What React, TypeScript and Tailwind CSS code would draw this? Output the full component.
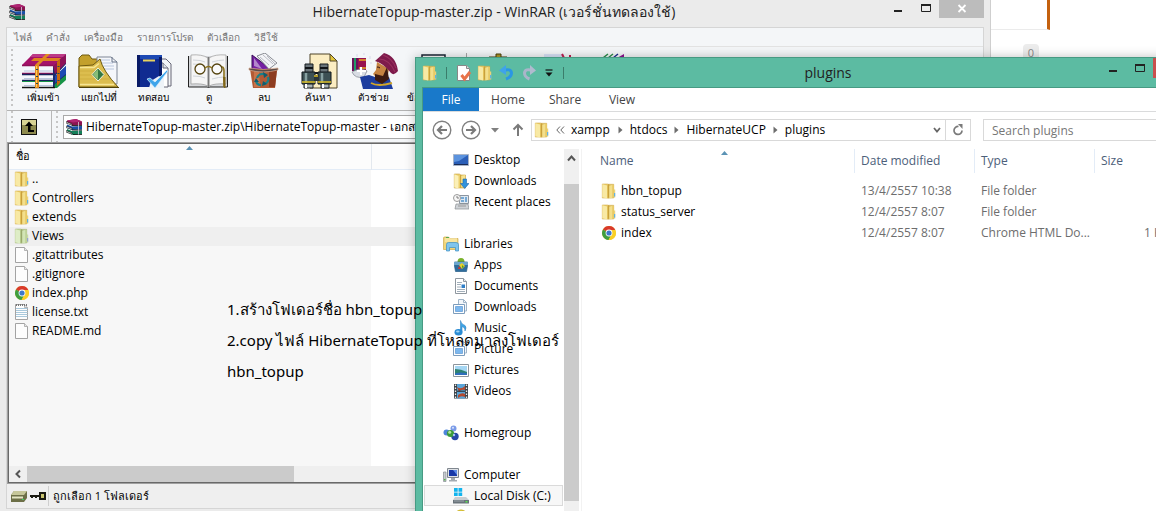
import React from "react";

type IconProps = { className?: string };

function Folder({ className = "" }: IconProps) {
  return (
    <svg viewBox="0 0 16 16" className={`h-4 w-4 shrink-0 ${className}`} aria-hidden="true">
      <path d="M1.300 1h5.200L8 2v13H1.300z" fill="#eacb69" stroke="#d6b152" strokeWidth=".6" />
      <path d="M7 1.300h5.700V15H7z" fill="#e6c762" stroke="#cfa94a" strokeWidth=".6" />
      <path d="M1.300 1.300 6 2.500v13L1.300 14.300z" fill="#f8e9a4" />
      <path d="M6 2.500 7 2v13l-1 .5z" fill="#e3c25a" />
      <path d="M7 1.500h1.300v13.300H7z" fill="#c9a03c" />
      <path d="M8.300 3 11.500 1.800v13l-3.200.7z" fill="#f3df8c" />
      <path d="M11.500 2h1.500v12.500h-1.500z" fill="#e8ca66" />
      <path d="M13 6.500h1.200v8H13z" fill="#ecd27a" />
      <path d="M13 10h1.200v3.500H13z" fill="#5fb2e4" />
    </svg>
  );
}

function Page({ lines = false }: { lines?: boolean }) {
  return (
    <svg viewBox="0 0 16 16" className="h-4 w-4 shrink-0" aria-hidden="true">
      <path d="M1.500.5h9l3 3v12h-12z" fill="#fdfdfd" stroke="#a3a3a3" />
      <path d="M10.500.5v3h3" fill="#e8e8e8" stroke="#a3a3a3" strokeWidth=".8" />
      {lines && (
        <>
          <path d="M2 4.500h11.500M2 6.500h11.500M2 8.500h11.500M2 10.500h11.500M2 12.500h11.500" stroke="#a9c9dc" />
          <path d="M2 1h11" stroke="#777" strokeDasharray="1 1" strokeWidth="2" />
        </>
      )}
    </svg>
  );
}

function Chrome() {
  return (
    <svg viewBox="0 0 16 16" className="h-4 w-4 shrink-0" aria-hidden="true">
      <circle cx="8" cy="8" r="7" fill="#f9cf26" />
      <path d="M8 8 1.940 4.500A7 7 0 0 1 14.300 5H8z" fill="#d93a2b" />
      <path d="M8 8 1.940 4.500A7 7 0 0 0 7.600 15l3.200-5.500z" fill="#3f9e3f" />
      <path d="M8 8h3L7.600 15A7 7 0 0 0 14.300 5H8z" fill="#f9cf26" />
      <circle cx="8" cy="8" r="3.400" fill="#fff" />
      <circle cx="8" cy="8" r="2.600" fill="#3c78c8" />
    </svg>
  );
}

function MiniBooks() {
  return (
    <svg viewBox="0 0 16 16" className="h-4 w-4 shrink-0" aria-hidden="true">
      <path d="M1 1.500 10 0l6 2.500V6L6 6.500 1 4z" fill="#8a1452" />
      <path d="M1 1.500 10 0l6 2.500-9 1z" fill="#b02573" />
      <path d="M1 5.500 6 7.500 16 7v3.500L6 11 1 9z" fill="#1950a8" />
      <path d="M1 10l5 2 10-.5V15l-9 1-6-2.500z" fill="#15805a" />
      <path d="M0 2.500 6 5v1.200L0 4zM0 7l6 2.300v1.200L0 8.500zM0 11.500 6 14v1.200L0 13z" fill="#fff" stroke="#111" strokeWidth=".6" />
      <path d="M6 6.600h10M6 11h10M7 15.600h9" stroke="#111" strokeWidth=".9" />
      <path d="M12.500 3v12.500" stroke="#d6cde0" strokeWidth=".8" />
    </svg>
  );
}

function BooksBig() {
  return (
    <svg viewBox="0 0 44 36" className="h-9 w-11" aria-hidden="true">
      <path d="M31 12.500 44 1v10L34 22v1l10-10v10L34 34l-3 1z" fill="#1b2a6b" />
      <path d="M31 12.500 44 1v9L33 21z" fill="#8d1258" />
      <path d="M33 23l11-10v8L33 30z" fill="#1c49b4" />
      <path d="M33 31l11-9v5l-9 8h-3z" fill="#179447" />
      <path d="M0 12 11 1h33L31 13z" fill="#a5126a" />
      <path d="M11 1h33l-3 3H8z" fill="#bd3a86" />
      <path d="M2 13h29v7H2zM2 22h29v5H2zM2 29h29v5H2z" fill="#f4f7fc" />
      <path d="M2 18h29M2 25.500h29M2 32.500h29" stroke="#b9c6dd" />
      <path d="M0 12.500h31M0 20.500h31" stroke="#8d1258" strokeWidth="1.500" />
      <path d="M0 21.500h31M0 27.500h31" stroke="#14235a" strokeWidth="1.300" />
      <path d="M0 28.500h31" stroke="#179447" />
      <path d="M0 34.500h33" stroke="#111" strokeWidth="1.400" />
      <path d="M12 5h27l-3 3H9z" fill="#dd8220" />
      <path d="M13 12 24 1h4L17 12v23h-4z" fill="#e08a1e" />
      <path d="M14.500 13v21" stroke="#ffcb5c" strokeWidth="1" />
      <path d="M35 9l3-3v24l-3 3z" fill="#c8680f" />
      <path d="M15 16v1M15 23v1M15 30v1M36.500 13v1M36.500 20v1M36.500 27v1" stroke="#234a5c" strokeWidth="2" />
    </svg>
  );
}

function ExtractBig() {
  return (
    <svg viewBox="0 0 44 36" className="h-9 w-11" aria-hidden="true">
      <path d="M2 5 5 2h7l3 4h8v28H2z" fill="#c3a02c" stroke="#6f5a10" />
      <path d="M20 4h14l6 5v22H20z" fill="#f5f7fb" stroke="#7e8796" />
      <path d="M23 7h10M23 10h13M23 13h14M23 16h14" stroke="#b9c6dd" />
      <path d="M35 4v5h5" fill="none" stroke="#68748a" />
      <path d="M2 13 16 12l7-6q3 12 18 28H2z" fill="#dcbd4e" stroke="#6f5a10" />
      <path d="M3 14.500h14l5-4M3 31.500h34" stroke="#f6e594" strokeWidth="1.500" fill="none" />
      <path d="M3 18h20M3 22h26M3 26h30" stroke="#cfae3f" />
      <path d="m21 15 6 6.500-6 6.500-6-6.500z" fill="#347842" stroke="#f3f3e0" />
      <path d="M21 16v11l-5-5.500z" fill="#86bd78" />
      <path d="M2 34.500h40" stroke="#514209" />
    </svg>
  );
}

function TestBig() {
  return (
    <svg viewBox="0 0 44 36" className="h-9 w-11" aria-hidden="true">
      <path d="M22 6h12l5 5v22H22z" fill="#f1f3f6" stroke="#667" />
      <path d="M20 10h11l5 5v19H20z" fill="#fff" stroke="#667" />
      <path d="M31 10v5h5" fill="#dde2e9" stroke="#667" />
      <path d="M5 2h25v32H5z" fill="#102b91" />
      <path d="M5 2h25v4H5z" fill="#1c49b4" />
      <path d="M5 2h3v32H5zM27 4h3v30h-3z" fill="#081a66" />
      <path d="M11 7.500h12" stroke="#e7d35f" strokeWidth="2" />
      <path d="m19 28 8-5 5 2v10H17z" fill="#eef3f8" />
      <path d="m15 26 3-1 5 4L35 17l1 1-13 17z" fill="#3fa4ea" stroke="#d5eeff" strokeWidth=".7" />
    </svg>
  );
}

function ViewBig() {
  return (
    <svg viewBox="0 0 44 36" className="h-9 w-11" aria-hidden="true">
      <path d="M1.500 3v31h19l1 1 1-1h18V3" fill="#d5d7da" stroke="#222" />
      <path d="M4 2q11-1 17 3v28q-6-3-17-2zM39 2Q28 1 22 5v28q6-3 17-2z" fill="#f5f5f5" stroke="#999" strokeWidth=".7" />
      <path d="M6 7q8 0 12 2M6 11q8 0 12 2M6 23q8 0 12 2M25 9q7-2 12-2M25 26q7-2 12-2" stroke="#d0d4d9" fill="none" />
      <path d="M21.500 4v30" stroke="#777" strokeWidth="1.500" />
      <circle cx="13" cy="16" r="5" fill="#fafafa" stroke="#54430e" strokeWidth="1.300" />
      <circle cx="30" cy="16" r="5" fill="#fafafa" stroke="#54430e" strokeWidth="1.300" />
      <path d="M18 15q3.500-3 7 0M35 14q2 0 2 4v16" stroke="#8b721c" strokeWidth="1.600" fill="none" />
      <path d="M36 24h2.500v11H37z" fill="#80661a" />
    </svg>
  );
}

function DeleteBig() {
  return (
    <svg viewBox="0 0 44 36" className="h-9 w-11" aria-hidden="true">
      <path d="M10 2 30 17H10z" fill="#7520a2" stroke="#3a0e58" />
      <path d="M12 5v8l8 3z" fill="#dccde6" opacity=".6" />
      <path d="m15 3 8-3 12 10-8 6z" fill="#f3f4f7" stroke="#8a8d94" />
      <path d="m18 4 9 8M21 2l10 9M25 3l8 8" stroke="#b8bbc3" />
      <path d="M8 16h27l-2 19H11z" fill="#b25a35" />
      <path d="M27 17h8l-2 17h-6z" fill="#8d3c20" />
      <path d="M12 18h5l1 16h-6z" fill="#c9744a" />
      <path d="M7 15q14 3 29 0v2q-15 4-29 0z" fill="#5c4b48" stroke="#d9a98c" strokeWidth=".7" />
      <path d="M15 25a6 6 0 0 1 7-4M26 24a5 5 0 0 1-4 7M19 32a5 5 0 0 1-5-4" stroke="#1a7f88" strokeWidth="2.300" fill="none" />
      <path d="m21 19 5 3-4 3zM25 31l-5 2 1-5zM12 29l2-4 3 4z" fill="#0e5e70" />
    </svg>
  );
}

function FindBig() {
  return (
    <svg viewBox="0 0 44 36" className="h-9 w-11" aria-hidden="true">
      <path d="M13 1h20l7 7v27H13z" fill="#fbedc2" stroke="#4f4428" />
      <path d="M33 1v7h7z" fill="#e2c53b" stroke="#4f4428" />
      <path d="M8 11h8v9H8zM23 11h8v9h-8z" fill="#69747a" stroke="#171c20" />
      <path d="M8 15h8M23 15h8M17 20h6" stroke="#101418" strokeWidth="2" />
      <path d="M5 19h13v12H5zM21 19h13v12H21z" fill="#3c5054" stroke="#13191c" />
      <path d="M9 20v10M25 20v10" stroke="#86a0a1" strokeWidth="2.500" />
      <path d="M18 22h4v6h-4z" fill="#2b3437" />
      <path d="M5 29h13M21 29h13M17 23h4" stroke="#d9bc22" strokeWidth="1.500" />
      <path d="M7 31h9v4H7zM24 31h8v4h-8z" fill="#aab3b5" stroke="#181c1e" />
      <path d="M9 31v4M26 31v4" stroke="#fff" strokeWidth="2" />
    </svg>
  );
}

function WizardBig() {
  return (
    <svg viewBox="0 0 50 36" className="h-9 w-[50px]" aria-hidden="true">
      <path d="M3 5h7v13H3z" fill="#6c1258" />
      <path d="M5 5h2v13H5z" fill="#1f9a66" />
      <path d="M9 5h8v14H9z" fill="#981150" />
      <path d="M10 7h7M10 15h7" stroke="#e5aa23" strokeWidth="1.500" />
      <path d="M3 19q8-5 15-1l-3 6q-9 2-12-5z" fill="#d9dde4" stroke="#7d838e" strokeWidth=".7" />
      <path d="M12 14v8M8 18h9" stroke="#fff" strokeWidth="2" />
      <path d="m11 24 9-2 12 4 8-2 4 12H14z" fill="#1d3d9e" />
      <path d="M22 30q7 4 21 0" stroke="#d1a529" strokeWidth="2" fill="none" />
      <path d="m28 9 12 7-2 11-9-1-5-5 3-4z" fill="#c58342" />
      <path d="m26 21 8 2 4-9 2 12-7 5-7-4z" fill="#3c1b12" />
      <path d="M28 14q2 0 3 1" stroke="#311" fill="none" />
      <path d="M26 8 35 0q12 3 14 18-4 5-7 2Q34 10 26 8z" fill="#7e1a4b" />
      <path d="M30 6q10 0 16 13M34 2q9 3 13 13" stroke="#99305e" strokeWidth="1.200" fill="none" />
      <path d="M8 1v3M15 0v2M21 3v3M22 9v2" stroke="#d9d9ec" />
    </svg>
  );
}

function InfoBig() {
  return (
    <svg viewBox="0 0 44 36" className="h-9 w-11" aria-hidden="true">
      <path d="M15 2h23v32H15z" fill="#fafafa" stroke="#1b2433" strokeWidth="1.500" />
      <path d="M19 10h15M19 15h15M19 20h15" stroke="#516080" />
    </svg>
  );
}

function ScanBig() {
  return (
    <svg viewBox="0 0 44 36" className="h-9 w-11" aria-hidden="true">
      <path d="M11 1h5v3h6v30H4V4h7z" fill="#ad9625" stroke="#4a3f0d" />
    </svg>
  );
}

function CommentBig() {
  return (
    <svg viewBox="0 0 44 36" className="h-9 w-11" aria-hidden="true">
      <path d="M0 1h20v33H0z" fill="#d8e1f6" />
      <path d="M18 1l2 4M26 2v6" stroke="#bf2050" strokeWidth="2" />
    </svg>
  );
}

function SfxBig() {
  return (
    <svg viewBox="0 0 44 36" className="h-9 w-11" aria-hidden="true">
      <path d="m0 5 5-4M5 5l5-4" stroke="#2c8c4b" strokeWidth="1.500" />
      <path d="m10 5 5-4" stroke="#1b2a8b" strokeWidth="1.500" />
      <path d="M14 5l7-4v33H0V8z" fill="#8d1290" />
    </svg>
  );
}

function Svg16({ children }: { children: React.ReactNode }) {
  return (
    <svg viewBox="0 0 16 16" className="h-4 w-4 shrink-0" aria-hidden="true">
      {children}
    </svg>
  );
}

const navIcons = {
  desktop: (
    <Svg16>
      <path d="M.5 2.500h15v11H.5z" fill="#2b5fb8" stroke="#a9b5c8" />
      <path d="M1 3h14l-9 6-5 1z" fill="#5c93de" />
      <path d="M1 12h14v1H1z" fill="#1a2c55" />
    </Svg16>
  ),
  downloads: (
    <Svg16>
      <path d="M1.300 1h5L8 2h4.500v13H1.300z" fill="#eccf6c" stroke="#c9a23f" strokeWidth=".6" />
      <path d="m1.300 1.300 4.200 1.700v12.700l-4.200-1.400z" fill="#fbf0b8" />
      <path d="M7 2h1.300v13H7z" fill="#cfa641" />
      <path d="M8.300 3 12 2v12H8.300z" fill="#f6e391" />
      <path d="M10 6h3.500v4.500H16L11.700 15.500 7.500 10.500H10z" fill="#3193dc" stroke="#1b66ad" strokeWidth=".6" />
    </Svg16>
  ),
  recent: (
    <Svg16>
      <path d="M6.500 1.500h9v8h-9z" fill="#dfe8f0" stroke="#8b95a0" />
      <path d="M8 3h3v2H8zM12 3h2v5h-2zM8 6h3v2H8z" fill="#76a9d4" />
      <path d="M3 10h12l1 5H2z" fill="#cfd3d7" stroke="#8b8f94" strokeWidth=".7" />
      <path d="M5 12h8" stroke="#999" />
      <circle cx="4" cy="4" r="3.500" fill="#f7f7f7" stroke="#9a9a9a" />
      <path d="M4 2v2h2" stroke="#666" fill="none" strokeWidth=".8" />
    </Svg16>
  ),
  libraries: (
    <Svg16>
      <path d="M.5 2q0-1 1-1h4l1.500 1.500H15v11H.5z" fill="#f0d579" stroke="#cfab4d" strokeWidth=".7" />
      <path d="M2 3h12M2 5h12" stroke="#fff4c4" />
      <path d="M3 1.500h3" stroke="#55a94f" />
      <path d="M3.500 15V8.500q0-2 2-2H13q2.500 0 2.500 2V15h-3v-3.500h-6V15z" fill="#7fc4ec" stroke="#3d8fc6" strokeWidth=".7" />
    </Svg16>
  ),
  apps: (
    <Svg16>
      <path d="M4.500 5q0-4 3.500-4t3.500 4z" fill="#7ab22c" />
      <path d="M1.500 5h13v4l-1 5.500h-11L1.500 9z" fill="#2f6d9c" stroke="#235a86" strokeWidth=".7" />
      <path d="M1 5h14v3H1z" fill="#6ba6cd" />
      <path d="M6 8l3-2 3 3-3 3z" fill="#e8cf2a" />
      <path d="m6 9 2 3H5z" fill="#d0342c" />
      <path d="M9 8l2 2-2 1z" fill="#4b9b2e" />
    </Svg16>
  ),
  documents: (
    <Svg16>
      <path d="M2.500.5h8l3 3v12h-11z" fill="#fff" stroke="#8f979f" />
      <path d="M10.500.5v3h3" fill="#e8eef3" stroke="#8f979f" />
      <path d="M4 4.500h5M4 6.500h4M4 11.500h8M4 13.500h8M4 9h4" stroke="#8a9aa8" strokeWidth=".8" />
      <path d="M8.500 6.500H12V10H8.500z" fill="#2f7fc8" />
    </Svg16>
  ),
  stack: (
    <Svg16>
      <path d="M5.500.5h5l3 3v8.500h-8z" fill="#f2f6fa" stroke="#9fb4c8" />
      <path d="M10.500.5v3h3" fill="none" stroke="#9fb4c8" />
      <path d="M.5 5.500h11v9H.5z" fill="#fff" stroke="#7d9dbc" />
      <path d="M2.500 7.500h7v5h-7z" fill="#7db8ee" stroke="#4c8bcc" strokeWidth=".6" />
    </Svg16>
  ),
  music: (
    <Svg16>
      <path d="M7.500.5Q8 4 12 5.500q2 2 0 5.500.5-3-3-4.500V12H7.500z" fill="#3ea3e4" stroke="#1f74b8" strokeWidth=".5" />
      <ellipse cx="5.500" cy="12.300" rx="4" ry="3.200" fill="#2a8cd4" />
      <ellipse cx="4.800" cy="11.500" rx="1.800" ry="1.100" fill="#9bd3f6" />
    </Svg16>
  ),
  pictures: (
    <Svg16>
      <path d="M.5 2.500h15v12H.5z" fill="#fff" stroke="#8c959d" />
      <path d="M2 4h12v9H2z" fill="#a5d6f3" />
      <path d="M2 7q6 0 12 3v3H2z" fill="#2d8272" />
      <path d="M2 11.500q6-2 12 0V13H2z" fill="#2f6ebd" />
    </Svg16>
  ),
  videos: (
    <Svg16>
      <path d="M1 1h14v14.500H1z" fill="#3c4248" />
      <path d="M4 1h8v14.500H4z" fill="#5aa5d8" />
      <path d="M4 4q4 3 8-1v4Q8 6 6 9zM5 12q4-3 7-1v3Q8 12 5 15z" fill="#b4492e" />
      <path d="M2.500 1.500v14M13.500 1.500v14" stroke="#eee" strokeWidth="1.300" strokeDasharray="1.500 1.500" />
      <path d="M4 8.200h8" stroke="#222" />
    </Svg16>
  ),
  homegroup: (
    <Svg16>
      <circle cx="3.500" cy="7.500" r="3" fill="#4f86dc" />
      <circle cx="10.500" cy="3.500" r="3" fill="#7b9be8" />
      <circle cx="12" cy="11.500" r="3.700" fill="#2647a8" />
      <circle cx="7.500" cy="8.500" r="3.600" fill="#3c9b3c" />
      <circle cx="6.700" cy="7.300" r="1.500" fill="#b4e4a0" />
      <circle cx="11" cy="10" r="1.200" fill="#a5c0f5" />
      <circle cx="10" cy="2.700" r="1" fill="#dce6fb" />
    </Svg16>
  ),
  computer: (
    <Svg16>
      <path d="M4.500 1.500h11v9h-11z" fill="#dfe2e6" stroke="#80878f" />
      <path d="M6 3h8v6H6z" fill="#1838a8" />
      <path d="M10 3h4v5z" fill="#5d8be8" />
      <path d="M8 11h4v2h2v1.500H6V13h2z" fill="#a5abb2" />
      <path d="M.5 5h2.500v9.500H.5z" fill="#c6cbd0" stroke="#868d94" strokeWidth=".7" />
      <path d="M1 12h1.500v1.500H1z" fill="#54b948" />
    </Svg16>
  ),
  disk: (
    <Svg16>
      <path d="M1 0h3.700v3.700H1zM5.500 0h3.700v3.700H5.500zM1 4.400h3.700v3.700H1zM5.500 4.400h3.700v3.700H5.500z" fill="#12b4ee" />
      <path d="M2 9h11l3 3H0z" fill="#c8cdd1" />
      <path d="M0 12h16v3.500H0z" fill="#69737a" />
      <path d="M1 13h10" stroke="#9da6ac" />
      <path d="M12.500 13h2v1.500h-2z" fill="#5be04f" />
    </Svg16>
  ),
  coin: (
    <Svg16>
      <circle cx="8" cy="7.500" r="6.500" fill="#f2e24a" stroke="#c7ae24" />
    </Svg16>
  ),
};

type NavEntry = { label: string; icon: keyof typeof navIcons; top?: boolean; selected?: boolean } | null;

const nav: NavEntry[] = [
  { label: "Desktop", icon: "desktop" },
  { label: "Downloads", icon: "downloads" },
  { label: "Recent places", icon: "recent" },
  null,
  { label: "Libraries", icon: "libraries", top: true },
  { label: "Apps", icon: "apps" },
  { label: "Documents", icon: "documents" },
  { label: "Downloads", icon: "stack" },
  { label: "Music", icon: "music" },
  { label: "Picture", icon: "stack" },
  { label: "Pictures", icon: "pictures" },
  { label: "Videos", icon: "videos" },
  null,
  { label: "Homegroup", icon: "homegroup", top: true },
  null,
  { label: "Computer", icon: "computer", top: true },
  { label: "Local Disk (C:)", icon: "disk", selected: true },
  { label: "", icon: "coin" },
];

const tools = [
  { label: "เพิ่มเข้า", icon: <BooksBig /> },
  { label: "แยกไปที่", icon: <ExtractBig /> },
  { label: "ทดสอบ", icon: <TestBig /> },
  { label: "ดู", icon: <ViewBig /> },
  { label: "ลบ", icon: <DeleteBig /> },
  { label: "ค้นหา", icon: <FindBig /> },
  { label: "ตัวช่วย", icon: <WizardBig /> },
  { label: "ข้อมูลไฟล์", icon: <InfoBig /> },
];

const archive = [
  { name: "..", icon: <Folder /> },
  { name: "Controllers", icon: <Folder /> },
  { name: "extends", icon: <Folder /> },
  { name: "Views", icon: <Folder className="hue-rotate-30 saturate-50" />, selected: true },
  { name: ".gitattributes", icon: <Page /> },
  { name: ".gitignore", icon: <Page /> },
  { name: "index.php", icon: <Chrome /> },
  { name: "license.txt", icon: <Page lines /> },
  { name: "README.md", icon: <Page /> },
];

const files = [
  { name: "hbn_topup", date: "13/4/2557 10:38", type: "File folder", size: "", icon: <Folder /> },
  { name: "status_server", date: "12/4/2557 8:07", type: "File folder", size: "", icon: <Folder /> },
  { name: "index", date: "12/4/2557 8:07", type: "Chrome HTML Do...", size: "1 KB", icon: <Chrome /> },
];

function Grip() {
  return <div className="w-[2px] shrink-0 self-stretch bg-[repeating-linear-gradient(to_bottom,#c6c6c6_0_2px,transparent_2px_5px)]" />;
}

function SortMark() {
  return (
    <svg viewBox="0 0 7 4" className="absolute inset-x-0 top-0.5 mx-auto h-1 w-[7px]" aria-hidden="true">
      <path d="M3.500 0 7 4H0z" fill="#5b93b5" />
    </svg>
  );
}

function ArchiveWindow() {
  return (
    <section className="absolute inset-y-0 left-0 flex w-[991px] flex-col border-r border-[#cfcfcf] bg-[#ebebeb] pb-0.5 pl-1.5 pr-[6px]">
      <header className="flex h-[27px] shrink-0 items-start">
        <div className="ml-[3px] mt-1">
          <MiniBooks />
        </div>
        <h1 className="min-w-0 flex-1 pl-[74px] text-center text-[14px] leading-6 text-[#222]">
          HibernateTopup-master.zip - WinRAR (เวอร์ชั่นทดลองใช้)
        </h1>
        <div className="flex items-start">
          <button aria-label="Minimize" className="h-[18px] w-[27px]">
            <svg viewBox="0 0 27 18" className="h-[18px] w-[27px]"><path d="M5 11h8" stroke="#222" strokeWidth="2" /></svg>
          </button>
          <button aria-label="Maximize" className="h-[18px] w-[23px]">
            <svg viewBox="0 0 23 18" className="h-[18px] w-[23px]"><path d="M5.500 5v6.500h9V5" fill="none" stroke="#222" /><path d="M5 5h10" stroke="#222" strokeWidth="2" /></svg>
          </button>
          <button aria-label="Close" className="h-[18px] w-[45px] bg-[#bcbcbc]">
            <svg viewBox="0 0 45 18" className="h-[18px] w-[45px]"><path d="m19.500 5 7 7m0-7-7 7" stroke="#fff" strokeWidth="1.800" /></svg>
          </button>
        </div>
      </header>

      <div className="flex min-h-0 flex-1 flex-col border border-[#d5d5d5] bg-[#f4f6f8]">
        <nav className="flex h-[19px] shrink-0 items-center gap-[14px] border-b border-[#e3e3e3] pl-[7px] text-[10px] text-[#777]">
          {["ไฟล์", "คำสั่ง", "เครื่องมือ", "รายการโปรด", "ตัวเลือก", "วิธีใช้"].map((m) => (
            <button key={m}>{m}</button>
          ))}
        </nav>

        <div className="flex h-16 shrink-0 border-b border-[#b3b3b3] py-0.5 pl-1">
          <Grip />
          <div className="ml-[3px] flex pt-1">
            {tools.map((t) => (
              <button key={t.label} className="flex w-[55px] flex-col items-center">
                {t.icon}
                <span className="text-[10px] leading-4 text-black">{t.label}</span>
              </button>
            ))}
            <div className="mx-2.5 w-px bg-[#a5a5a5]" />
            {[<ScanBig key="a" />, <CommentBig key="b" />, <SfxBig key="c" />].map((icon, i) => (
              <button key={i} aria-label={["Scan", "Comment", "SFX"][i]} className="flex w-[59px] flex-col items-center">
                {icon}
              </button>
            ))}
          </div>
        </div>

        <div className="flex h-[31px] shrink-0 pl-1">
          <div className="flex items-center gap-2 border-r border-[#b8b8b8] pr-[14px]">
            <Grip />
            <button aria-label="Up one level">
              <svg viewBox="0 0 16 16" className="h-4 w-4">
                <path d="M0 0h16v16H0z" fill="#111" />
                <path d="M1 1h14v14H1z" fill="#8d8a4e" />
                <path d="M1 1h14v5H1z" fill="#d8d394" />
                <path d="M8 2.500 12 7H9.500v4H13v2H7V7H4z" fill="#000" />
              </svg>
            </button>
          </div>
          <div className="flex flex-1 items-center gap-[5px] pl-1">
            <Grip />
            <label className="flex h-6 flex-1 items-center gap-1 border border-[#a9a9a9] bg-white pl-0.5">
              <MiniBooks />
              <input
                aria-label="Path"
                className="min-w-0 flex-1 text-[12px] text-black outline-none"
                defaultValue="HibernateTopup-master.zip\HibernateTopup-master - เอกสาร ZIP"
              />
            </label>
          </div>
        </div>

        <div className="flex min-h-0 flex-1 flex-col border border-[#a0a0a0]">
          <div className="flex min-h-0 flex-1 flex-col border border-[#696969] bg-white">
            <div className="min-h-0 flex-1 overflow-hidden bg-[linear-gradient(to_right,#f7f7f7_362px,#fff_362px)]">
              <table className="w-full table-fixed border-collapse text-[12px] text-black">
                <colgroup>
                  <col className="w-[362px]" />
                  <col />
                </colgroup>
                <thead>
                  <tr className="h-[25px] border-b border-[#e3ecf7] bg-[#fcfcfc]">
                    <th className="relative border-r border-[#e3e8ee] p-0 pl-[7px] text-left text-[11px] font-normal">
                      <SortMark />
                      ชื่อ
                    </th>
                    <th className="p-0" />
                  </tr>
                </thead>
                <tbody>
                  {archive.map((f) => (
                    <tr key={f.name} className={f.selected ? "h-[19px] bg-[#efefef]" : "h-[19px]"}>
                      <td className="p-0 pl-[5px]" colSpan={2}>
                        <div className="flex h-[19px] items-center gap-0.5">
                          {f.icon}
                          {f.name}
                        </div>
                      </td>
                    </tr>
                  ))}
                </tbody>
              </table>
            </div>
            <div className="flex h-4 shrink-0 bg-[#efefef]">
              <svg viewBox="0 0 18 16" className="h-4 w-[18px]" aria-hidden="true">
                <path d="M11 4.500 7.500 8l3.500 3.500" fill="none" stroke="#555" strokeWidth="2" />
              </svg>
              <div className="w-[267px] bg-[#cbcbcb]" />
            </div>
          </div>
        </div>

        <footer className="flex h-6 shrink-0 items-center bg-[#efefef] pl-1 text-[11px] text-black">
          <svg viewBox="0 0 36 14" className="h-[14px] w-9" aria-hidden="true">
            <path d="M0 6 3 2h13v7l-3 4H0z" fill="#6d7048" />
            <path d="M0 6 3 2h13l-3 4z" fill="#c6c79a" />
            <path d="M1 8.500h11" stroke="#e5e6c4" strokeWidth="2" />
            <path d="M11 10.500h2" stroke="#3bd060" />
            <path d="M19 6h9v2h-9zM20 8h2v1h-2zM24 8h2v1h-2zM28 3h7v8h-7z" fill="#1a1a12" />
            <path d="M30 5h3v4h-3z" fill="#c9c46e" />
          </svg>
          <span className="ml-px flex h-5 items-center border-l border-[#cfcfcf] pl-1">ถูกเลือก 1 โฟลเดอร์</span>
        </footer>
      </div>
    </section>
  );
}

function RoundArrow({ flip = false }: { flip?: boolean }) {
  return (
    <svg viewBox="0 0 20 20" className={flip ? "h-5 w-5 -scale-x-100" : "h-5 w-5"} aria-hidden="true">
      <circle cx="10" cy="10" r="8.800" fill="none" stroke="#808080" strokeWidth="1.400" />
      <path d="M15 10H6m4-4-4 4 4 4" fill="none" stroke="#7a7a7a" strokeWidth="2.200" />
    </svg>
  );
}

function Crumb() {
  return (
    <svg viewBox="0 0 5 8" className="h-2 w-[5px]" aria-hidden="true">
      <path d="m.5.5 4 3.500-4 3.500z" fill="#6d6d6d" />
    </svg>
  );
}

function ExplorerWindow() {
  return (
    <section className="absolute bottom-0 left-[415px] right-[-85px] top-[57px] flex flex-col border border-b-0 border-[#479a83] bg-[#5cbba2] px-[6px] shadow-[0_0_10px_rgba(0,0,0,0.25)]">
      <header className="relative flex h-[29px] shrink-0 items-center">
        <div className="flex items-center">
          <Folder />
          <div className="mx-2 h-3 w-px bg-[#3b7d6b]" />
          <button aria-label="Properties">
            <svg viewBox="0 0 17 18" className="h-[18px] w-[17px]">
              <path d="M2.500 1.500h9l3 3v12h-12z" fill="#fff" stroke="#888" />
              <path d="M11.500 1.500v3h3" fill="#ddd" stroke="#888" />
              <path d="m6.500 11 3 4L15 8" fill="none" stroke="#e8734a" strokeWidth="3" />
            </svg>
          </button>
          <button aria-label="New folder" className="ml-[5px]"><Folder /></button>
          <button aria-label="Undo" className="ml-[6px]">
            <svg viewBox="0 0 16 16" className="h-4 w-4">
              <path d="M4 5.500q8-2.500 8.500 2.500 0 4-5.500 6" fill="none" stroke="#2b97e4" strokeWidth="3" />
              <path d="M7 0v10L0 5.500z" fill="#3fa3ea" />
            </svg>
          </button>
          <button aria-label="Redo" className="ml-[6px]">
            <svg viewBox="0 0 16 16" className="h-4 w-4">
              <path d="M12 5.500Q4 3 3.500 8q0 4 5 6" fill="none" stroke="#a9b5ca" strokeWidth="3" />
              <path d="M9 0v10l6-4.500z" fill="#b0bbcf" />
            </svg>
          </button>
          <button aria-label="Customize toolbar" className="ml-2">
            <svg viewBox="0 0 8 8" className="h-2 w-2"><path d="M.5 1h7" stroke="#111" strokeWidth="1.200" /><path d="M.5 3.500h7L4 7.500z" fill="#111" /></svg>
          </button>
          <div className="ml-[10px] h-3 w-px bg-[#3b7d6b]" />
        </div>
        <h2 className="pointer-events-none absolute inset-x-0 text-center text-[14px] leading-6 text-[#222]">plugins</h2>
        <div className="ml-auto flex h-full items-start">
          <button aria-label="Minimize" className="h-5 w-[27px]">
            <svg viewBox="0 0 27 20" className="h-5 w-[27px]"><path d="M6 13h8" stroke="#222" strokeWidth="2" /></svg>
          </button>
          <button aria-label="Maximize" className="h-5 w-[23px]">
            <svg viewBox="0 0 23 20" className="h-5 w-[23px]"><path d="M5.500 7v6.500h9V7" fill="none" stroke="#222" /><path d="M5 7h10" stroke="#222" strokeWidth="2" /></svg>
          </button>
          <button aria-label="Close" className="h-5 w-[81px] bg-[#c9504e]" />
        </div>
      </header>

      <div className="flex min-h-0 flex-1 flex-col border border-b-0 border-[#479a83] bg-white">
        <nav className="flex h-6 shrink-0 border-b border-[#dadbdc] text-[12px] text-[#444]">
          <button className="w-14 bg-[#1979ca] text-white">File</button>
          <button className="ml-px w-14">Home</button>
          <button className="w-[58px]">Share</button>
          <button className="w-14">View</button>
        </nav>

        <div className="flex h-9 shrink-0 items-center pl-[9px] pr-[7px] text-[12px]">
          <button aria-label="Back"><RoundArrow /></button>
          <button aria-label="Forward" className="ml-[9px]"><RoundArrow flip /></button>
          <button aria-label="Recent locations" className="ml-[10px]">
            <svg viewBox="0 0 8 5" className="h-[5px] w-2"><path d="M0 0h8L4 4.500z" fill="#808080" /></svg>
          </button>
          <button aria-label="Up" className="ml-[13px]">
            <svg viewBox="0 0 12 14" className="h-[14px] w-3"><path d="M6 13V2M1.500 6.500 6 2l4.500 4.500" fill="none" stroke="#7a7a7a" strokeWidth="2" /></svg>
          </button>
          <div className="ml-[7px] flex h-[22px] flex-1 items-center border border-[#d9d9d9] text-black">
            <div className="ml-0.5"><Folder /></div>
            <svg viewBox="0 0 9 8" className="mx-[6px] h-2 w-[9px]" aria-hidden="true">
              <path d="M4 .5.8 4 4 7.500M8 .5 4.800 4 8 7.500" fill="none" stroke="#666" />
            </svg>
            <button className="mr-2">xampp</button>
            <Crumb />
            <button className="mx-[7px]">htdocs</button>
            <Crumb />
            <button className="mx-[7px]">HibernateUCP</button>
            <Crumb />
            <button className="mx-[7px]">plugins</button>
            <button aria-label="Previous locations" className="ml-auto mr-1">
              <svg viewBox="0 0 8 8" className="h-2 w-2"><path d="m1 2 3 3.500L7 2" fill="none" stroke="#666" strokeWidth="1.800" /></svg>
            </button>
            <button aria-label="Refresh" className="flex h-full w-[25px] items-center justify-center border-l border-[#d9d9d9]">
              <svg viewBox="0 0 12 12" className="h-3 w-3"><path d="M6.500 2.500A4 4 0 1 0 10 6.500" fill="none" stroke="#7a7a7a" strokeWidth="1.700" /><path d="M6 0h4.500v5z" fill="#7a7a7a" /></svg>
            </button>
          </div>
          <input
            aria-label="Search plugins"
            placeholder="Search plugins"
            className="ml-3 h-[22px] w-[243px] border border-[#d9d9d9] px-2 text-[12px] outline-none placeholder:text-[#767676]"
          />
        </div>

        <div className="mt-px flex min-h-0 flex-1">
          <aside className="w-[141px] shrink-0 overflow-hidden pl-px pr-px text-[12px] text-black">
            {nav.map((n, i) =>
              n === null ? (
                <div key={i} className="h-[21px]" />
              ) : (
                <a
                  key={i}
                  href="#"
                  aria-label={n.label || "Drive"}
                  className={`flex h-[21px] items-center gap-[5px] whitespace-nowrap border ${n.top ? "pl-[18px]" : "pl-7"} ${n.selected ? "border-[#dadada] bg-[#f7f7f7]" : "border-transparent"}`}
                >
                  {navIcons[n.icon]}
                  {n.label}
                </a>
              ),
            )}
          </aside>
          <div className="flex w-[15px] shrink-0 flex-col bg-[#f0f0f0] pb-[10px]">
            <svg viewBox="0 0 15 35" className="h-[35px] w-[15px] shrink-0" aria-hidden="true">
              <path d="m4 11.500 3.500-4 3.500 4" fill="none" stroke="#555" strokeWidth="2" />
            </svg>
            <div className="flex-1 bg-[#cbcbcb]" />
          </div>
          <div className="ml-0.5 min-w-0 flex-1 border-l border-[#f2f2f2] pl-3">
            <table className="w-full table-fixed border-collapse text-left text-[12px] text-[#6d6d6d]">
              <colgroup>
                <col className="w-[260px]" />
                <col className="w-[120px]" />
                <col className="w-[120px]" />
                <col className="w-20" />
                <col />
              </colgroup>
              <thead className="text-[#4c607a]">
                <tr>
                  {["Name", "Date modified", "Type", "Size"].map((h, i) => (
                    <th key={h} className="relative p-0 pb-[7px] font-normal">
                      {i === 0 && <SortMark />}
                      <div className={`flex h-6 items-center pl-[6px] ${i > 0 ? "border-l border-[#e3ecf7]" : ""}`}>{h}</div>
                    </th>
                  ))}
                  <th className="p-0" />
                </tr>
              </thead>
              <tbody>
                {files.map((f) => (
                  <tr key={f.name} className="h-[21px]">
                    <td className="p-0 pl-[7px] text-black">
                      <div className="flex items-center gap-1">
                        {f.icon}
                        {f.name}
                      </div>
                    </td>
                    <td className="p-0 pl-[7px]">{f.date}</td>
                    <td className="p-0 pl-[7px]">{f.type}</td>
                    <td className="p-0 pr-[5px] text-right">{f.size}</td>
                    <td className="p-0" />
                  </tr>
                ))}
              </tbody>
            </table>
          </div>
        </div>
      </div>
    </section>
  );
}

export default function App() {
  return (
    <main className="relative h-screen overflow-hidden bg-white font-['Open_Sans','Noto_Sans',sans-serif]">
      <div className="absolute left-[991px] top-0 h-[30px] w-[59px] border-b border-r-[3px] border-b-[#ebebeb] border-r-[#c4610f]" />
      <div className="absolute left-[1023px] top-11 w-4 rounded-t-sm bg-[#ececec] text-center text-[11px] leading-[18px] text-[#888]">0</div>
      <ArchiveWindow />
      <ExplorerWindow />
      <div className="pointer-events-none absolute left-[227px] top-[294px] whitespace-nowrap font-['Noto_Sans','Open_Sans',sans-serif] text-[15px] leading-[31px] text-black">
        <p>1.สร้างโฟเดอร์ชื่อ hbn_topup</p>
        <p>2.copy ไฟล์ HibernateTopup ที่โหลดมาลงโฟเดอร์</p>
        <p>hbn_topup</p>
      </div>
    </main>
  );
}
